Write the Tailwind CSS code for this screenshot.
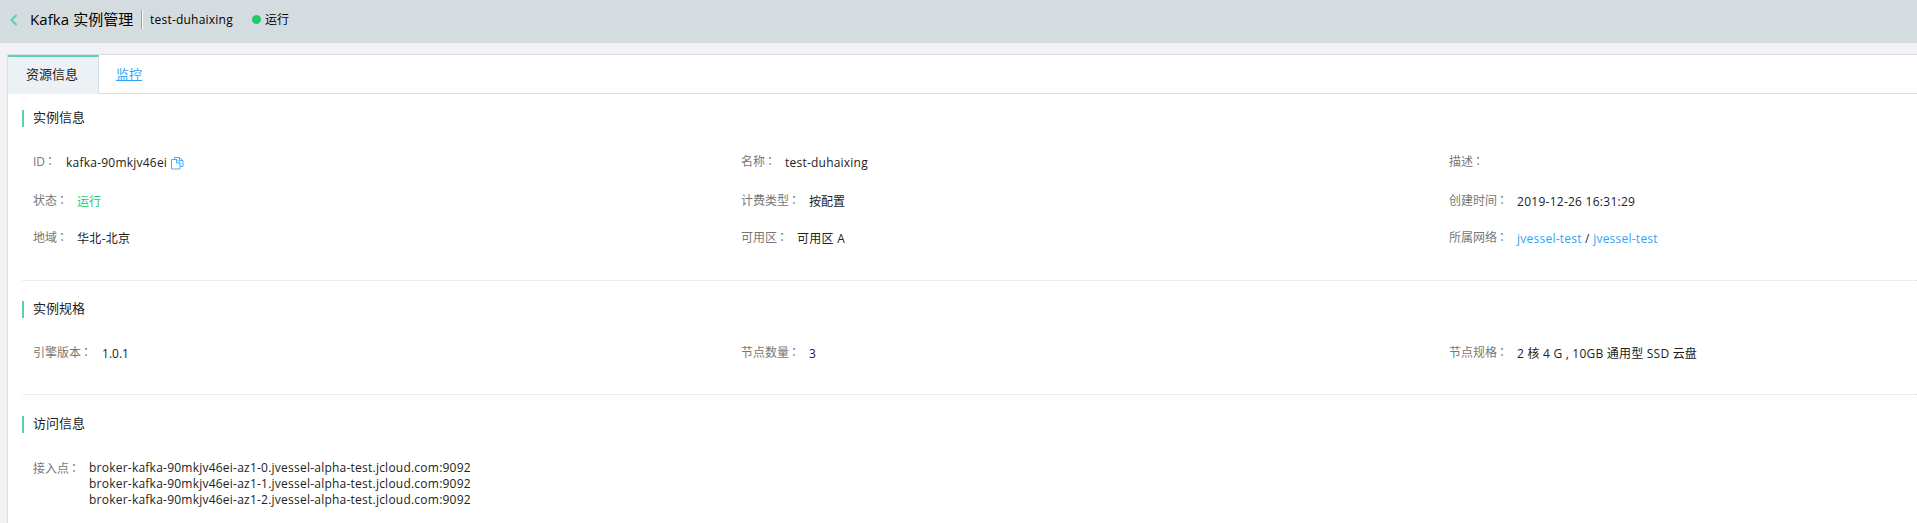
<!DOCTYPE html>
<html lang="zh-CN">
<head>
<meta charset="utf-8">
<title>Kafka 实例管理</title>
<script src="https://cdn.jsdelivr.net/npm/@tailwindcss/browser@4"></script>
</head>
<body class="h-[523px] overflow-hidden bg-[#f2f2f5] font-['Open_Sans','Noto_Sans_CJK_SC',sans-serif] text-[12px] leading-[16px] text-[#222] whitespace-nowrap">
<header class="flex h-[43px] items-center bg-[#d5dce0] pb-[4px] pl-[10px] text-black">
  <svg class="h-[12px] w-[8px]" viewBox="0 0 8 12" fill="none" stroke="#5cceb3" stroke-width="2"><path d="M6.5 1 1.5 6l5 5"/></svg>
  <h1 class="ml-[12px] w-[103px] pb-[2px] text-[15px] leading-[20px]"><span class="tracking-[0.1px]">Kafka</span> 实例管理</h1>
  <span class="ml-[8px] h-[19px] w-[2px] border-r border-white bg-[#9aa0a4]"></span>
  <span class="ml-[7px] w-[83px] tracking-[0.22px]">test-duhaixing</span>
  <span class="ml-[19px] h-[9px] w-[9px] rounded-full bg-[#1dcb6b]"></span>
  <span class="ml-[4px]">运行</span>
</header>
<main class="mt-[11px] ml-[7px] h-[469px] overflow-hidden border-t border-l border-[#d6dfe5] bg-white">
  <nav class="flex h-[39px] text-[13px]">
    <a class="w-[91px] border-t-2 border-r border-t-[#5cceb3] border-r-[#d6dfe5] bg-[#ecf1f5] pt-[8px] pl-[18px] leading-[18px]">资源信息</a>
    <a class="flex-1 border-b border-[#d6dfe5] pt-[10px] pl-[17px] leading-[18px] text-[#2ea3f8] underline">监控</a>
  </nav>
  <section class="ml-[14px] h-[187px] w-[2135px] border-b border-dotted border-[#d6dde2] pt-[16px]">
    <h2 class="h-[17px] border-l-2 border-[#5cceb3] pl-[9px] text-[13px] leading-[15px]">实例信息</h2>
    <div class="mt-[26px] grid grid-cols-3 grid-rows-[39px_37px_37px] pl-[11px]">
      <div class="flex"><span class="text-[#777]">ID<span lang="zh-Hant" class="mr-px -ml-px font-['Noto_Sans_CJK_TC']">：</span></span><span class="ml-[9px] pt-[2px] tracking-[0.22px]">kafka-90mkjv46ei</span>
        <svg class="mt-[4px] ml-[4px] h-[13px] w-[13px]" viewBox="0 0 13 13" fill="none" stroke="#4aa9fb"><path d="M3.5 2.5V.5h5l3.500 3v6H9.500M8.500.5v3h3.500M.5 2.500h5.500l3 3v6.500H.5zM5.500 2.500v3.500h3.500"/></svg></div>
      <div class="flex"><span class="text-[#777]">名称<span lang="zh-Hant" class="mr-px -ml-px font-['Noto_Sans_CJK_TC']">：</span></span><span class="ml-[8px] pt-[2px] tracking-[0.22px]">test-duhaixing</span></div>
      <div class="flex"><span class="text-[#777]">描述<span lang="zh-Hant" class="mr-px -ml-px font-['Noto_Sans_CJK_TC']">：</span></span></div>
      <div class="flex"><span class="text-[#777]">状态<span lang="zh-Hant" class="mr-px -ml-px font-['Noto_Sans_CJK_TC']">：</span></span><span class="ml-[8px] pt-[2px] text-[#1dcb6b]">运行</span></div>
      <div class="flex"><span class="text-[#777]">计费类型<span lang="zh-Hant" class="mr-px -ml-px font-['Noto_Sans_CJK_TC']">：</span></span><span class="ml-[8px] pt-[2px]">按配置</span></div>
      <div class="flex"><span class="text-[#777]">创建时间<span lang="zh-Hant" class="mr-px -ml-px font-['Noto_Sans_CJK_TC']">：</span></span><span class="ml-[8px] pt-[2px] tracking-[0.26px]">2019-12-26 16:31:29</span></div>
      <div class="flex"><span class="text-[#777]">地域<span lang="zh-Hant" class="mr-px -ml-px font-['Noto_Sans_CJK_TC']">：</span></span><span class="ml-[8px] pt-[2px] tracking-[0.3px]">华北-北京</span></div>
      <div class="flex"><span class="text-[#777]">可用区<span lang="zh-Hant" class="mr-px -ml-px font-['Noto_Sans_CJK_TC']">：</span></span><span class="ml-[8px] pt-[2px] tracking-[0.26px]">可用区 A</span></div>
      <div class="flex"><span class="text-[#777]">所属网络<span lang="zh-Hant" class="mr-px -ml-px font-['Noto_Sans_CJK_TC']">：</span></span><span class="ml-[8px] pt-[2px] tracking-[0.24px]"><a class="text-[#2ea3f8]">jvessel-test</a> / <a class="text-[#2ea3f8]">jvessel-test</a></span></div>
    </div>
  </section>
  <section class="ml-[14px] h-[114px] w-[2135px] border-b border-dotted border-[#d6dde2] pt-[20px]">
    <h2 class="h-[17px] border-l-2 border-[#5cceb3] pl-[9px] text-[13px] leading-[15px]">实例规格</h2>
    <div class="mt-[26px] grid grid-cols-3 pl-[11px]">
      <div class="flex"><span class="text-[#777]">引擎版本<span lang="zh-Hant" class="mr-px -ml-px font-['Noto_Sans_CJK_TC']">：</span></span><span class="ml-[9px] pt-[2px]">1.0.1</span></div>
      <div class="flex"><span class="text-[#777]">节点数量<span lang="zh-Hant" class="mr-px -ml-px font-['Noto_Sans_CJK_TC']">：</span></span><span class="ml-[8px] pt-[2px]">3</span></div>
      <div class="flex"><span class="text-[#777]">节点规格<span lang="zh-Hant" class="mr-px -ml-px font-['Noto_Sans_CJK_TC']">：</span></span><span class="ml-[8px] pt-[2px] tracking-[0.22px]">2 核 4 G , 10GB 通用型 SSD 云盘</span></div>
    </div>
  </section>
  <section class="ml-[14px] pt-[21px]">
    <h2 class="h-[17px] border-l-2 border-[#5cceb3] pl-[9px] text-[13px] leading-[15px]">访问信息</h2>
    <div class="mt-[27px] flex pl-[11px]"><span class="text-[#777]">接入点<span lang="zh-Hant" class="mr-px -ml-px font-['Noto_Sans_CJK_TC']">：</span></span>
      <div class="ml-[8px] tracking-[0.23px]"><p>broker-kafka-90mkjv46ei-az1-0.jvessel-alpha-test.jcloud.com:9092</p><p>broker-kafka-90mkjv46ei-az1-1.jvessel-alpha-test.jcloud.com:9092</p><p>broker-kafka-90mkjv46ei-az1-2.jvessel-alpha-test.jcloud.com:9092</p></div>
    </div>
  </section>
</main>
</body>
</html>
